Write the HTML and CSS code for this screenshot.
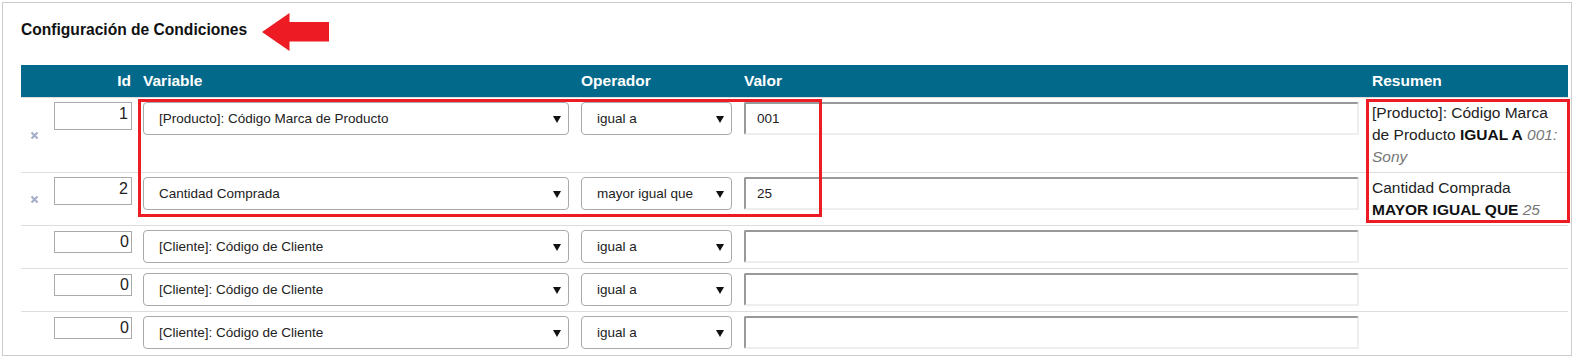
FILE: index.html
```html
<!DOCTYPE html>
<html>
  <head>
    <meta charset="utf-8" />
    <meta name="viewport" content="width=device-width, initial-scale=1" />
    <title>Configuración de Condiciones</title>
    <link rel="stylesheet" href="styles.css">
  </head>
  <body>
    <div class="panel">
      <div class="panel-title">
        <h2>Configuración de Condiciones</h2>
        <svg class="pointer" width="67" height="38" viewBox="0 0 67 38">
          <polygon points="0,19 27.5,0 27.5,9 67,9 67,28.5 27.5,28.5 27.5,38" fill="#ed1c24" />
        </svg>
      </div>

      <table class="conditions">
        <colgroup>
          <col style="width: 27px" />
          <col style="width: 89px" />
          <col style="width: 438px" />
          <col style="width: 163px" />
          <col style="width: 627px" />
          <col style="width: 203px" />
        </colgroup>
        <thead>
          <tr>
            <th></th>
            <th class="id-col">Id</th>
            <th>Variable</th>
            <th>Operador</th>
            <th>Valor</th>
            <th class="summary-col">Resumen</th>
          </tr>
        </thead>
        <tbody>
          <tr>
            <td class="remove">
              <svg width="9" height="9" viewBox="0 0 9 9"><path d="M1.5 1.5 L7.5 7.5 M7.5 1.5 L1.5 7.5" stroke="#a6b0c9" stroke-width="2.2" /></svg>
            </td>
            <td><input class="id-input" type="text" value="1" /></td>
            <td>
              <div class="select"><select><option>[Producto]: Código Marca de Producto</option></select></div>
            </td>
            <td>
              <div class="select"><select><option>igual a</option></select></div>
            </td>
            <td><input class="value-input" type="text" value="001" /></td>
            <td class="summary">[Producto]: Código Marca de Producto <b>IGUAL A</b> <em>001: Sony</em></td>
          </tr>
          <tr>
            <td class="remove">
              <svg width="9" height="9" viewBox="0 0 9 9"><path d="M1.5 1.5 L7.5 7.5 M7.5 1.5 L1.5 7.5" stroke="#a6b0c9" stroke-width="2.2" /></svg>
            </td>
            <td><input class="id-input" type="text" value="2" /></td>
            <td>
              <div class="select"><select><option>Cantidad Comprada</option></select></div>
            </td>
            <td>
              <div class="select"><select><option>mayor igual que</option></select></div>
            </td>
            <td><input class="value-input" type="text" value="25" /></td>
            <td class="summary">Cantidad Comprada <b>MAYOR IGUAL QUE</b> <em>25</em></td>
          </tr>
          <tr>
            <td class="remove"></td>
            <td><input class="id-input new" type="text" value="0" /></td>
            <td>
              <div class="select"><select><option>[Cliente]: Código de Cliente</option></select></div>
            </td>
            <td>
              <div class="select"><select><option>igual a</option></select></div>
            </td>
            <td><input class="value-input" type="text" value="" /></td>
            <td class="summary"></td>
          </tr>
          <tr>
            <td class="remove"></td>
            <td><input class="id-input new" type="text" value="0" /></td>
            <td>
              <div class="select"><select><option>[Cliente]: Código de Cliente</option></select></div>
            </td>
            <td>
              <div class="select"><select><option>igual a</option></select></div>
            </td>
            <td><input class="value-input" type="text" value="" /></td>
            <td class="summary"></td>
          </tr>
          <tr>
            <td class="remove"></td>
            <td><input class="id-input new" type="text" value="0" /></td>
            <td>
              <div class="select"><select><option>[Cliente]: Código de Cliente</option></select></div>
            </td>
            <td>
              <div class="select"><select><option>igual a</option></select></div>
            </td>
            <td><input class="value-input" type="text" value="" /></td>
            <td class="summary"></td>
          </tr>
        </tbody>
      </table>
    </div>

    <!-- annotation boxes drawn over the screenshot -->
    <div class="highlight highlight-fields"></div>
    <div class="highlight highlight-summary"></div>
  </body>
</html>
```

FILE: styles.css
```css
body {
  margin: 0;
  background: #fff;
  color: #222;
  font-family: "Liberation Sans", Arial, sans-serif;
}

.panel {
  margin: 2px 2px 0;
  height: 354px;
  box-sizing: border-box;
  border: 1px solid #ccc;
  padding: 10px 2px 0 18px;
  overflow: hidden;
}

.panel-title {
  display: flex;
  align-items: flex-start;
  gap: 15px;
  height: 38px;
}

.panel-title h2 {
  margin: 0;
  padding-top: 7px;
  font-size: 15.6px;
  line-height: 20px;
  font-weight: bold;
  color: #111;
}

.pointer {
  display: block;
}

.conditions {
  margin-top: 14px;
  width: 1547px;
  table-layout: fixed;
  border-spacing: 0;
}

.conditions th {
  height: 32px;
  padding: 0 6px;
  background-color: #02698a;
  color: #fff;
  font-size: 15.5px;
  font-weight: bold;
  text-align: left;
  vertical-align: middle;
}

.conditions th.id-col {
  text-align: right;
}

.conditions th.summary-col {
  padding-left: 7px;
}

.conditions td {
  border-top: 1px solid #ddd;
  padding: 4px 6px 5px;
  vertical-align: top;
}

.conditions td.remove {
  padding: 0;
  text-align: center;
  vertical-align: middle;
}

.remove svg {
  display: block;
  margin: 0 auto;
}

.id-input {
  display: block;
  width: 78px;
  height: 28px;
  box-sizing: border-box;
  border: 1px solid #aaa;
  padding: 0 3px 4px;
  font-family: "Liberation Sans", Arial, sans-serif;
  font-size: 16px;
  color: #222;
  text-align: right;
}

.id-input.new {
  height: 22px;
  margin-top: 1px;
  padding: 0 2px 0;
}

.select {
  position: relative;
}

.select select {
  display: block;
  width: 100%;
  height: 33px;
  box-sizing: border-box;
  appearance: none;
  -webkit-appearance: none;
  border: 1px solid #aaa;
  border-radius: 4px;
  background: #fff;
  padding: 0 26px 0 15px;
  font-family: "Liberation Sans", Arial, sans-serif;
  font-size: 13.5px;
  color: #222;
}

.select::after {
  content: "";
  position: absolute;
  right: 8px;
  top: 14px;
  border-left: 4px solid transparent;
  border-right: 4px solid transparent;
  border-top: 7px solid #111;
  pointer-events: none;
}

.value-input {
  display: block;
  width: 100%;
  height: 33px;
  box-sizing: border-box;
  border-style: solid;
  border-width: 2px;
  border-color: #999 #eee #eee #999;
  border-radius: 2px;
  padding: 0 11px;
  font-family: "Liberation Sans", Arial, sans-serif;
  font-size: 13.5px;
  color: #222;
}

.conditions td.summary {
  padding: 4px 6px 4px 7px;
  font-size: 15.5px;
  line-height: 22px;
  color: #222;
}

.summary b {
  color: #111;
}

.summary em {
  color: #777;
}

.highlight {
  position: absolute;
  box-sizing: border-box;
  border: 3px solid #ed1c24;
}

.highlight-fields {
  left: 138px;
  top: 99px;
  width: 684px;
  height: 118px;
}

.highlight-summary {
  left: 1366px;
  top: 99px;
  width: 204px;
  height: 124px;
}
```
